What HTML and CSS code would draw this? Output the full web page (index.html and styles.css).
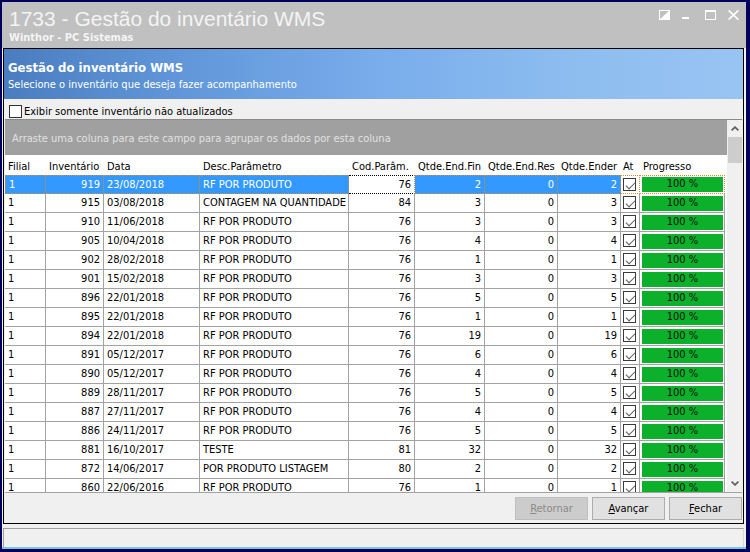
FILE: index.html
```html
<!DOCTYPE html>
<html lang="pt-BR">
<head>
<meta charset="utf-8">
<title>1733 - Gestão do inventário WMS</title>
<link rel="stylesheet" href="styles.css">
</head>
<body>
<div class="window">
  <div class="titlebar">
    <div class="titles">
      <div class="title">1733 - Gestão do inventário WMS</div>
      <div class="subtitle">Winthor - PC Sistemas</div>
    </div>
    <div class="controls">
      <svg class="ic-restore" width="11" height="10" viewBox="0 0 11 10"><rect x="0.5" y="0.5" width="10" height="9" fill="none" stroke="#fff"/><polygon points="10.5,0.5 10.5,9.5 0.5,9.5" fill="#fff"/></svg>
      <svg class="ic-min" width="7" height="10" viewBox="0 0 7 10"><rect x="0" y="7" width="7" height="2" fill="#fff"/></svg>
      <svg class="ic-max" width="11" height="10" viewBox="0 0 11 10"><rect x="0.5" y="0.5" width="10" height="9" fill="none" stroke="#fff"/><rect x="0" y="0" width="11" height="2" fill="#fff"/></svg>
      <svg class="ic-close" width="11" height="10" viewBox="0 0 11 10"><path d="M0.6 0.4 L10.4 9.6 M10.4 0.4 L0.6 9.6" stroke="#fff" stroke-width="1.6" fill="none"/></svg>
    </div>
  </div>

  <div class="panel">
    <div class="banner">
      <div class="banner-title">Gestão do inventário WMS</div>
      <div class="banner-sub">Selecione o inventário que deseja fazer acompanhamento</div>
    </div>

    <div class="filter"><span class="box"></span><span>Exibir somente inventário não atualizados</span></div>

    <div class="gridwrap">
      <div class="gridmain">
        <div class="grouppanel">Arraste uma coluna para este campo para agrupar os dados por esta coluna</div>
        <div class="row head">
          <span>Filial</span><span>Inventário</span><span>Data</span><span>Desc.Parâmetro</span><span>Cod.Parâm.</span><span>Qtde.End.Fin</span><span>Qtde.End.Res</span><span>Qtde.Ender</span><span>At</span><span>Progresso</span>
        </div>
        <div class="rows">
          <div class="row sel"><span>1</span><span class="num">919</span><span>23/08/2018</span><span>RF POR PRODUTO</span><span class="num focus">76</span><span class="num">2</span><span class="num">0</span><span class="num">2</span><span class="at"><i class="cb"></i></span><span class="prog"><b>100 %</b></span></div>
          <div class="row"><span>1</span><span class="num">915</span><span>03/08/2018</span><span>CONTAGEM NA QUANTIDADE</span><span class="num">84</span><span class="num">3</span><span class="num">0</span><span class="num">3</span><span class="at"><i class="cb"></i></span><span class="prog"><b>100 %</b></span></div>
          <div class="row"><span>1</span><span class="num">910</span><span>11/06/2018</span><span>RF POR PRODUTO</span><span class="num">76</span><span class="num">3</span><span class="num">0</span><span class="num">3</span><span class="at"><i class="cb"></i></span><span class="prog"><b>100 %</b></span></div>
          <div class="row"><span>1</span><span class="num">905</span><span>10/04/2018</span><span>RF POR PRODUTO</span><span class="num">76</span><span class="num">4</span><span class="num">0</span><span class="num">4</span><span class="at"><i class="cb"></i></span><span class="prog"><b>100 %</b></span></div>
          <div class="row"><span>1</span><span class="num">902</span><span>28/02/2018</span><span>RF POR PRODUTO</span><span class="num">76</span><span class="num">1</span><span class="num">0</span><span class="num">1</span><span class="at"><i class="cb"></i></span><span class="prog"><b>100 %</b></span></div>
          <div class="row"><span>1</span><span class="num">901</span><span>15/02/2018</span><span>RF POR PRODUTO</span><span class="num">76</span><span class="num">3</span><span class="num">0</span><span class="num">3</span><span class="at"><i class="cb"></i></span><span class="prog"><b>100 %</b></span></div>
          <div class="row"><span>1</span><span class="num">896</span><span>22/01/2018</span><span>RF POR PRODUTO</span><span class="num">76</span><span class="num">5</span><span class="num">0</span><span class="num">5</span><span class="at"><i class="cb"></i></span><span class="prog"><b>100 %</b></span></div>
          <div class="row"><span>1</span><span class="num">895</span><span>22/01/2018</span><span>RF POR PRODUTO</span><span class="num">76</span><span class="num">1</span><span class="num">0</span><span class="num">1</span><span class="at"><i class="cb"></i></span><span class="prog"><b>100 %</b></span></div>
          <div class="row"><span>1</span><span class="num">894</span><span>22/01/2018</span><span>RF POR PRODUTO</span><span class="num">76</span><span class="num">19</span><span class="num">0</span><span class="num">19</span><span class="at"><i class="cb"></i></span><span class="prog"><b>100 %</b></span></div>
          <div class="row"><span>1</span><span class="num">891</span><span>05/12/2017</span><span>RF POR PRODUTO</span><span class="num">76</span><span class="num">6</span><span class="num">0</span><span class="num">6</span><span class="at"><i class="cb"></i></span><span class="prog"><b>100 %</b></span></div>
          <div class="row"><span>1</span><span class="num">890</span><span>05/12/2017</span><span>RF POR PRODUTO</span><span class="num">76</span><span class="num">4</span><span class="num">0</span><span class="num">4</span><span class="at"><i class="cb"></i></span><span class="prog"><b>100 %</b></span></div>
          <div class="row"><span>1</span><span class="num">889</span><span>28/11/2017</span><span>RF POR PRODUTO</span><span class="num">76</span><span class="num">5</span><span class="num">0</span><span class="num">5</span><span class="at"><i class="cb"></i></span><span class="prog"><b>100 %</b></span></div>
          <div class="row"><span>1</span><span class="num">887</span><span>27/11/2017</span><span>RF POR PRODUTO</span><span class="num">76</span><span class="num">4</span><span class="num">0</span><span class="num">4</span><span class="at"><i class="cb"></i></span><span class="prog"><b>100 %</b></span></div>
          <div class="row"><span>1</span><span class="num">886</span><span>24/11/2017</span><span>RF POR PRODUTO</span><span class="num">76</span><span class="num">5</span><span class="num">0</span><span class="num">5</span><span class="at"><i class="cb"></i></span><span class="prog"><b>100 %</b></span></div>
          <div class="row"><span>1</span><span class="num">881</span><span>16/10/2017</span><span>TESTE</span><span class="num">81</span><span class="num">32</span><span class="num">0</span><span class="num">32</span><span class="at"><i class="cb"></i></span><span class="prog"><b>100 %</b></span></div>
          <div class="row"><span>1</span><span class="num">872</span><span>14/06/2017</span><span>POR PRODUTO LISTAGEM</span><span class="num">80</span><span class="num">2</span><span class="num">0</span><span class="num">2</span><span class="at"><i class="cb"></i></span><span class="prog"><b>100 %</b></span></div>
          <div class="row"><span>1</span><span class="num">860</span><span>22/06/2016</span><span>RF POR PRODUTO</span><span class="num">76</span><span class="num">1</span><span class="num">0</span><span class="num">1</span><span class="at"><i class="cb"></i></span><span class="prog"><b>100 %</b></span></div>
        </div>
      </div>
      <div class="vscroll">
        <div class="sb-arrow"><svg width="8" height="5" viewBox="0 0 8 5"><polyline points="0.6,4.4 4,1.1 7.4,4.4" fill="none" stroke="#606060" stroke-width="1.7"/></svg></div>
        <div class="sb-thumb"></div>
        <div class="sb-track"></div>
        <div class="sb-arrow"><svg width="8" height="5" viewBox="0 0 8 5"><polyline points="0.6,0.6 4,3.9 7.4,0.6" fill="none" stroke="#606060" stroke-width="1.7"/></svg></div>
      </div>
    </div>

    <div class="buttons">
      <button class="btn disabled" type="button"><u>R</u>etornar</button>
      <button class="btn" type="button"><u>A</u>vançar</button>
      <button class="btn" type="button"><u>F</u>echar</button>
    </div>
  </div>

  <div class="statusbar"></div>
</div>
</body>
</html>
```

FILE: styles.css
```css
* { box-sizing: border-box; }

html, body { margin: 0; padding: 0; }

body {
  width: 750px;
  height: 552px;
  overflow: hidden;
  background: #00005c;
  font-family: "DejaVu Sans Condensed", "Liberation Sans", sans-serif;
  font-size: 11px;
  color: #000;
}

.window {
  margin: 2px 4px 0 2px;
  height: 547px;
  background: #f0f0f0;
  border-bottom: 2px solid #7cc6da;
  display: flex;
  flex-direction: column;
}

/* ---------- title bar ---------- */
.titlebar {
  height: 46px;
  flex: none;
  background: #c0c0c0;
  display: flex;
  justify-content: space-between;
  padding: 5px 7px 0 7px;
  color: #fff;
}

.title {
  font-family: "Liberation Sans", sans-serif;
  font-size: 21px;
  line-height: 24px;
  color: #f4f4f4;
}

.subtitle {
  font-weight: bold;
  font-size: 11px;
  line-height: 13px;
  color: #f4f4f4;
}

.controls {
  display: flex;
  align-items: flex-start;
  padding-top: 3px;
}

.controls svg { display: block; }
.ic-min { margin-left: 12px; }
.ic-max { margin-left: 16px; }
.ic-close { margin-left: 12px; }

/* ---------- main panel ---------- */
.panel {
  margin: 0 2px 0 1px;
  height: 476px;
  flex: none;
  border: 1px solid #000;
  display: flex;
  flex-direction: column;
  background: #f0f0f0;
}

.banner {
  height: 50px;
  flex: none;
  padding: 11px 4px 0 4px;
  background: linear-gradient(90deg, #4a7dbf 0%, #5f95d8 22%, #78aceb 50%, #8cbcef 75%, #98c4f2 100%);
  color: #fff;
}

.banner-title {
  font-weight: bold;
  font-size: 13px;
  line-height: 16px;
}

.banner-sub {
  margin-top: 2px;
  font-size: 11px;
  line-height: 14px;
}

.filter {
  height: 20px;
  flex: none;
  display: flex;
  align-items: center;
  padding: 5px 0 0 5px;
  gap: 2px;
}

.filter .box {
  width: 13px;
  height: 13px;
  border: 1px solid #333;
  background: #fff;
}

/* ---------- grid ---------- */
.gridwrap {
  height: 374px;
  flex: none;
  margin: 0 1px;
  border-top: 1px solid #8a8a8a;
  border-bottom: 1px solid #a3a3a3;
  display: flex;
  background: #fff;
}

.gridmain {
  flex: 1;
  min-width: 0;
  display: flex;
  flex-direction: column;
}

.grouppanel {
  height: 35px;
  flex: none;
  background: #a0a0a0;
  color: #e0e0e0;
  padding: 2px 0 0 7px;
  line-height: 33px;
  white-space: nowrap;
}

.row {
  display: grid;
  grid-template-columns: 41px 58px 96px 149px 66px 70px 73px 63px 19px 85px;
}

.row > span {
  height: 19px;
  padding: 0 3px;
  line-height: 18px;
  border-right: 1px solid #a3a3a3;
  border-bottom: 1px solid #a3a3a3;
  white-space: nowrap;
  overflow: hidden;
}

.row.head > span {
  height: 20px;
  padding-top: 3px;
  line-height: 17px;
  border: none;
}

.row.head > span:nth-child(9) { padding: 3px 0 0 2px; }

.rows {
  flex: 1;
  overflow: hidden;
}

.row > .num { text-align: right; }

.row.sel > span {
  background: #3399ff;
  color: #fff;
  line-height: 17px;
  border-top: 1px dotted #d5893d;
  border-bottom: 1px dotted #d5893d;
  border-right: 1px dotted #d5893d;
}

.row.sel > span:first-child { border-left: 1px dotted #d5893d; }

.row.sel > .focus {
  background: #fff;
  color: #000;
  border-top: 1px dotted #000;
  border-bottom: 1px dotted #000;
}

.row.sel > .at,
.row.sel > .prog { background: #fff; color: #000; }

.row > .at { padding: 2px 0 0 2px; }

.cb {
  display: block;
  position: relative;
  width: 13px;
  height: 13px;
  border: 1px solid #3a3a3a;
  background: #fff;
}

.cb::after {
  content: "";
  position: absolute;
  left: 3.5px;
  top: 0.5px;
  width: 4px;
  height: 8px;
  border-right: 1.2px solid #5a5a5a;
  border-bottom: 1.2px solid #5a5a5a;
  transform: rotate(45deg);
}

.row > .prog { padding: 2px 1px 1px 2px; }
.row.sel > .prog { padding: 1px 1px 1px 2px; }

.prog b {
  display: block;
  height: 100%;
  background: #0cb02b;
  color: #111;
  font-weight: normal;
  text-align: center;
  line-height: 14px;
}

/* ---------- scrollbar ---------- */
.vscroll {
  width: 15px;
  flex: none;
  background: #f0f0f0;
  display: flex;
  flex-direction: column;
}

.sb-arrow {
  height: 17px;
  flex: none;
  display: flex;
  align-items: center;
  justify-content: center;
}

.sb-arrow svg { display: block; }

.sb-thumb {
  height: 26px;
  flex: none;
  margin-left: 1px;
  background: #cdcdcd;
}

.sb-track { flex: 1; }

/* ---------- buttons ---------- */
.buttons {
  flex: 1;
  display: flex;
  justify-content: flex-end;
  align-items: flex-start;
  gap: 4px;
  padding: 4px 1px 0 0;
}

.btn {
  width: 73px;
  height: 23px;
  margin: 0;
  padding: 0;
  border: 1px solid #adadad;
  background: #e1e1e1;
  font-family: inherit;
  font-size: 11px;
  color: #000;
}

.btn.disabled {
  background: #cccccc;
  border-color: #bfbfbf;
  color: #8a8a8a;
}

/* ---------- status bar ---------- */
.statusbar {
  margin: 4px 2px 0 1px;
  flex: 1;
  border-top: 1px solid #a0a0a0;
  border-left: 1px solid #a0a0a0;
  border-right: 1px solid #d8d8d8;
  background: #f0f0f0;
}
```
